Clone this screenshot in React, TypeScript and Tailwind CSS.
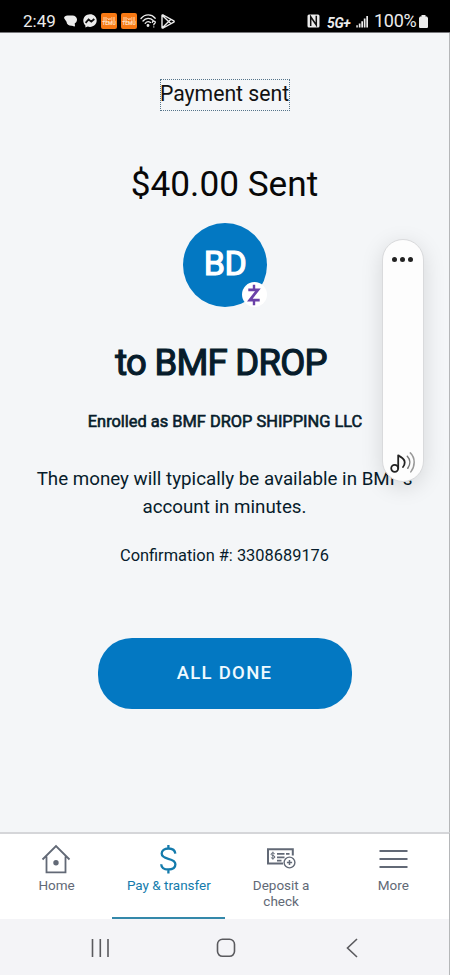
import React from 'react';

const StatusBar: React.FC = () => (
  <header className="h-[33px] shrink-0 bg-black border-b border-[#77777b] flex items-end justify-between pl-[23px] pr-[22px] pb-[2px] text-[#ececec]">
    <div className="flex items-center h-[18px]">
      <span className="w-[41px] text-[17px] leading-[18px] whitespace-nowrap">2:49</span>
      <svg className="w-[13px] h-[14px]" viewBox="0 0 13 14" fill="currentColor">
        <path d="M3.500 1.500h5C11 1.500 13 3.200 13 5.600c0 1.900-.9 3.200-2.300 3.900l.3 2.300c0 .4-.3.700-.7.600L8 11.800c-2.900.2-5.300-1.300-5.500-4L.3 4.500C-.5 3 1.300 1.500 3.500 1.500z" />
      </svg>
      <svg className="w-[14px] h-[14px] ml-[6px]" viewBox="0 0 14 14">
        <path d="M7 .3C3.200.3.300 3.100.300 6.700c0 1.900.8 3.500 2.100 4.700v2.200l2.300-1c.7.200 1.500.3 2.300.3 3.800 0 6.700-2.700 6.700-6.300S10.800.3 7 .3z" fill="currentColor" />
        <path d="M2.600 8.800L5.600 5.500l2.700 2.100 3-2.600" fill="none" stroke="#111" strokeWidth="1.800" />
      </svg>
      {[0, 1].map((i) => (
        <span key={i} className="w-[16px] h-[16px] ml-[4px] rounded-[2px] bg-[#f77914] text-[#ffe3c5] flex flex-col items-center justify-center text-[5px] leading-[5px] font-bold">
          <svg className="w-[12px] h-[4px]" viewBox="0 0 12 4" fill="none" stroke="currentColor" strokeWidth=".9">
            <path d="M0 1h2M0 3h2M3 0v4M4.500 1l1.500 2M7 1v2M8 1h1.500M8 3h1.500M11 0v4" />
          </svg>
          <span>TEMU</span>
        </span>
      ))}
      <svg className="w-[17px] h-[14px] ml-[3px]" viewBox="0 0 17 14" fill="none" stroke="currentColor" strokeWidth="1.300" strokeLinecap="round">
        <path d="M1 4.500C5-.2 11.300-.2 15.200 4.200M3 7c2.800-3.300 7.200-3.400 10.200-.5M5.200 9.300c1.500-1.800 3.600-2 5.300-.8" />
        <circle cx="8" cy="11.500" r=".8" fill="currentColor" />
        <path d="M12.300 8.400c.3-1.700 3.200-1.500 3 .1-.1 1-1.500 1.200-1.500 2.300M13.800 12.800v.1" />
      </svg>
      <svg className="w-[14px] h-[15px] ml-[4px]" viewBox="0 0 14 15" fill="none" stroke="currentColor" strokeWidth="1.400" strokeLinejoin="round">
        <path d="M1 1.500v12c0 .6.600.8 1.200.5L12.800 8.200c.5-.3.500-1 0-1.300L2.200 1C1.600.7 1 .9 1 1.500zM1.400 1.500L10 9.800M1.400 13.700L10 5.300" />
      </svg>
    </div>
    <div className="flex items-center h-[18px]">
      <svg className="w-[13px] h-[14px]" viewBox="0 0 13 14">
        <rect x=".5" y=".5" width="12" height="13" rx="1.500" fill="currentColor" />
        <path d="M3.700 12V2.800l5.600 8.200V1.800" fill="none" stroke="#111" strokeWidth="1.500" />
      </svg>
      <span className="w-[25px] ml-[7px] mt-[4px] text-[14px] leading-[14px] font-bold italic tracking-[-0.4px] whitespace-nowrap">5G+</span>
      <svg className="w-[13px] h-[13px] ml-[4px]" viewBox="0 0 13 13" fill="currentColor">
        <path d="M.3 10.300h1.500V12.500H.3zM2.800 8.500h1.700v4H2.800zM5.300 6.200H7v6.300H5.300zM7.800 3.500h1.700v9H7.800zM10.300 1H12v11.500h-1.700z" />
      </svg>
      <span className="w-[44px] ml-[5px] text-[18px] leading-[18px] tracking-[-0.300px] whitespace-nowrap">100%</span>
      <svg className="w-[9px] h-[13px] ml-[1px]" viewBox="0 0 9 13" fill="currentColor">
        <path d="M2.500 0h4v1.500H8L9 3v9.200l-.8.800H.8L0 12.200V3l1-1.500h1.500z" />
      </svg>
    </div>
  </header>
);

const Avatar: React.FC = () => (
  <div className="relative w-[84px] h-[84px] mt-[18px] rounded-full bg-[#0378c2] text-white flex items-center justify-center">
    <span className="text-[34px] leading-[40px] mt-[-5px] pl-px tracking-[-0.5px] [-webkit-text-stroke:1.2px_currentColor]">BD</span>
    <span className="absolute left-[59px] top-[59px] w-[25px] h-[25px] rounded-full bg-white flex items-center justify-center">
      <svg className="w-[14px] h-[22px]" viewBox="0 0 14 22" fill="none" stroke="#6a41a8" strokeWidth="2.800">
        <path d="M1.300 5.800h9.600L2.800 16.200h9.900" />
        <path d="M7 .8v4.500M7 16.500v4.700" strokeWidth="2.400" />
      </svg>
    </span>
  </div>
);

const MediaPanel: React.FC = () => (
  <aside className="absolute left-[382px] top-[239px] w-[42px] h-[243px] rounded-full bg-[#fdfdfd] border border-[#d9dadc] shadow-[0_5px_22px_rgba(0,0,0,0.13)] flex flex-col items-center justify-between pt-[17px] pb-[7px]">
    <div className="flex gap-[3px] pr-[2px]">
      <span className="w-[5px] h-[5px] rounded-full bg-[#222]" />
      <span className="w-[5px] h-[5px] rounded-full bg-[#222]" />
      <span className="w-[5px] h-[5px] rounded-full bg-[#222]" />
    </div>
    <svg className="w-[26px] h-[22px]" viewBox="0 0 26 22" fill="none" strokeLinecap="round">
      <circle cx="4.700" cy="16.300" r="3.500" stroke="#222" strokeWidth="1.800" />
      <path d="M8.200 16.300V2.800c1 2.300 6.500 2.700 6.500 7.700 0 1.700-.6 3.200-1.700 4.500" stroke="#222" strokeWidth="1.800" />
      <path d="M17.300 4.300c3.200 3.300 3.200 8.200.5 12" stroke="#777" strokeWidth="1.500" />
      <path d="M20.300.9c5.200 5 5 13.300.5 19" stroke="#999" strokeWidth="1.500" />
    </svg>
  </aside>
);

const HomeIcon = (
  <svg className="w-[30px] h-[30px]" viewBox="0 0 30 30" fill="none" stroke="#626976" strokeWidth="1.800">
    <path d="M1.500 15.500L15 2l13.500 13.500M5.500 12.500V28.300h19V12.500" />
    <circle cx="15" cy="18.800" r="2.700" fill="#626976" stroke="none" />
  </svg>
);

const DollarIcon = (
  <svg className="w-[30px] h-[30px]" viewBox="0 0 30 30" fill="none" stroke="#147bac" strokeWidth="2.300">
    <path d="M22.300 9.700C22 6.300 19.200 4.500 15.400 4.500c-4 0-6.700 2-6.700 5.100 0 3.300 2.800 4.300 6.600 5.200 4.200 1 7.100 2.100 7.100 5.500 0 3.400-2.900 5.200-7 5.200-4.200 0-7-1.800-7.200-5.300M15.400 1v3.700M15.400 25.500V29.500" />
  </svg>
);

const CheckIcon = (
  <svg className="w-[30px] h-[30px]" viewBox="0 0 30 30" fill="none" stroke="#626976" strokeWidth="1.600">
    <path d="M17 19.500H2V5.300h24.800v6.200" strokeWidth="2" />
    <path d="M8.700 9.800c-.5-1.100-3.700-1.200-3.700.4 0 1.800 3.900.8 3.900 2.800 0 1.800-3.400 1.700-4 .3M6.900 7.700v8" strokeWidth="1" />
    <path d="M11 9.900h7.500M20 9.900h3.500M11 13.400h7.500M11 16.600h4.500" />
    <circle cx="23.500" cy="18.500" r="5.400" strokeWidth="1.400" />
    <path d="M20.900 18.500h5.200M23.500 15.900v5.200" strokeWidth="1.500" />
  </svg>
);

const MenuIcon = (
  <svg className="w-[30px] h-[30px]" viewBox="0 0 30 30" stroke="#626976" strokeWidth="2">
    <path d="M1.500 7h28M1.500 15h28M1.500 23h28" />
  </svg>
);

const TABS = [
  { label: 'Home', icon: HomeIcon },
  { label: 'Pay & transfer', icon: DollarIcon, active: true },
  { label: 'Deposit a check', icon: CheckIcon },
  { label: 'More', icon: MenuIcon },
];

const App: React.FC = () => {
  return (
    <div className="relative w-[450px] h-[975px] overflow-hidden bg-[#f4f6f8] flex flex-col font-[Roboto,sans-serif]">
      <StatusBar />

      <main className="h-[799px] shrink-0 border-r border-[#b5b7b9] flex flex-col items-center text-center text-[#071c2b]">
        <h1 className="mt-[46px] w-[130px] h-[32px] border border-dotted border-[#55748a] text-[21.200px] leading-[28px] text-[#111] whitespace-nowrap flex justify-center">
          Payment sent
        </h1>
        <p className="mt-[52px] text-[35.200px] leading-[42px] text-[#080808] whitespace-nowrap">$40.00 Sent</p>
        <Avatar />
        <h2 className="mt-[34px] pr-[7px] text-[36.500px] leading-[44px] whitespace-nowrap tracking-[-0.750px] [-webkit-text-stroke:1.2px_currentColor]">to BMF DROP</h2>
        <p className="mt-[27px] pl-px text-[16.400px] leading-[20px] whitespace-nowrap [-webkit-text-stroke:0.6px_currentColor]">Enrolled as BMF DROP SHIPPING LLC</p>
        <p className="mt-[34px] text-[18.750px] leading-[27.500px] whitespace-nowrap">
          The money will typically be available in BMF's
          <br />
          account in minutes.
        </p>
        <p className="mt-[25px] text-[16.400px] leading-[20px] whitespace-nowrap">Confirmation #: 3308689176</p>
        <button className="mt-[72px] w-[254px] h-[71px] rounded-[34px] bg-[#0378c2] text-[#effaff] text-[18.500px] font-medium tracking-[1.300px]">
          ALL DONE
        </button>
      </main>

      <nav className="h-[87px] shrink-0 bg-white border-t-2 border-r border-t-[#d5d6d9] border-r-[#b5b7b9] grid grid-cols-4">
        {TABS.map((tab) => (
          <div
            key={tab.label}
            className={
              tab.active
                ? 'flex flex-col items-center pt-[10px] border-b-2 border-[#3488aa] text-[#147bac]'
                : 'flex flex-col items-center pt-[10px] text-[#626976]'
            }
          >
            {tab.icon}
            <span className="mt-[3px] pl-px max-w-[90px] text-center text-[13.500px] leading-[16px]">{tab.label}</span>
          </div>
        ))}
      </nav>

      <footer className="h-[56px] shrink-0 border-r border-[#b5b7b9] bg-[#f4f4f7] flex items-center pt-[2px] pl-[91px] text-[#5a5a5e]">
        <svg className="w-[18px] h-[20px]" viewBox="0 0 18 20" stroke="currentColor" strokeWidth="1.600">
          <path d="M1.500 1v18M9.300 1v18M17 1v18" />
        </svg>
        <svg className="w-[20px] h-[20px] ml-[107px]" viewBox="0 0 20 20" fill="none" stroke="currentColor" strokeWidth="1.600">
          <rect x="1.500" y="1.300" width="17" height="17" rx="5" />
        </svg>
        <svg className="w-[12px] h-[20px] ml-[110px]" viewBox="0 0 12 20" fill="none" stroke="currentColor" strokeWidth="1.600">
          <path d="M11 1L1.500 10l9.500 9" />
        </svg>
      </footer>

      <MediaPanel />
    </div>
  );
};

export default App;
